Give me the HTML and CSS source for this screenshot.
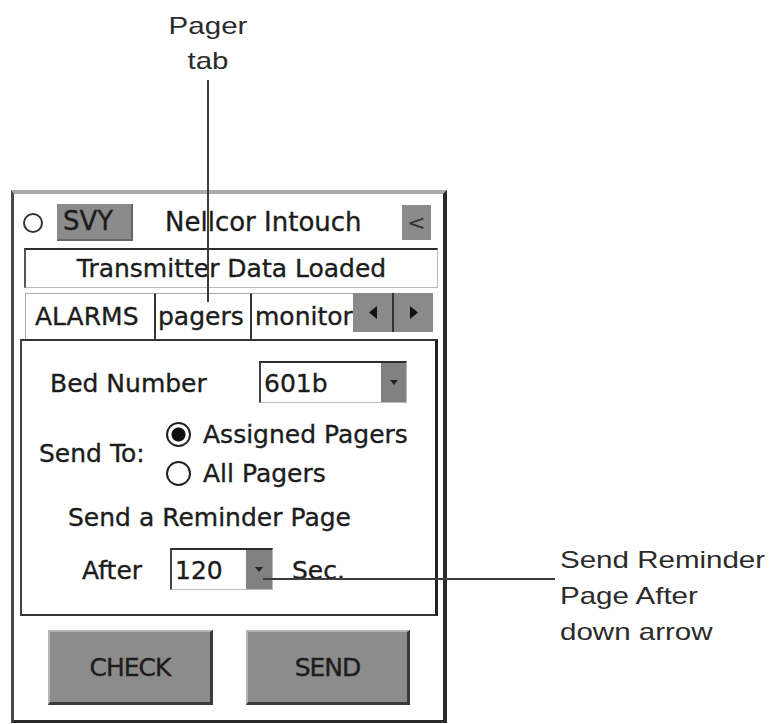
FILE: index.html
```html
<!DOCTYPE html>
<html>
<head>
<meta charset="utf-8">
<link rel="stylesheet" href="styles.css">
</head>
<body>
<div class="page">
  <div class="note note-top">Pager<br>tab</div>
  <div class="device">
    <div class="header">
      <span class="dot"></span>
      <span class="svy">SVY</span>
      <span class="title">Nellcor Intouch</span>
      <span class="back">&lt;</span>
    </div>
    <div class="status">Transmitter Data Loaded</div>
    <div class="tabs">
      <div class="tab tab-alarms">ALARMS</div>
      <div class="tab tab-pagers">pagers</div>
      <div class="tab tab-monitor">monitor</div>
      <div class="scroll">
        <span class="arrow"><svg width="8" height="13" viewBox="0 0 8 13"><polygon points="8,0 0,6.5 8,13" fill="#111"/></svg></span>
        <span class="arrow"><svg width="8" height="13" viewBox="0 0 8 13"><polygon points="0,0 8,6.5 0,13" fill="#111"/></svg></span>
      </div>
    </div>
    <div class="panel">
      <div class="row bed">
        <span class="label bed-label">Bed Number</span>
        <div class="combo combo-bed">
          <span class="combo-value">601b</span>
          <span class="combo-btn"><svg width="8" height="5" viewBox="0 0 8 5"><polygon points="0,0 8,0 4,5" fill="#222"/></svg></span>
        </div>
      </div>
      <div class="sendto">
        <span class="sendto-label">Send To:</span>
        <div class="radios">
          <div class="radio-row"><span class="radio checked"></span>Assigned Pagers</div>
          <div class="radio-row"><span class="radio"></span>All Pagers</div>
        </div>
      </div>
      <div class="reminder">Send a Reminder Page</div>
      <div class="row after">
        <span class="label after-label">After</span>
        <div class="combo combo-after">
          <span class="combo-value">120</span>
          <span class="combo-btn"><svg width="8" height="5" viewBox="0 0 8 5"><polygon points="0,0 8,0 4,5" fill="#222"/></svg></span>
        </div>
        <span class="label sec">Sec.</span>
      </div>
    </div>
    <div class="actions">
      <button class="btn btn-check">CHECK</button>
      <button class="btn btn-send">SEND</button>
    </div>
  </div>
  <div class="lead lead-v"></div>
  <div class="lead lead-h"></div>
  <div class="note note-right">Send Reminder<br>Page After<br>down arrow</div>
</div>
</body>
</html>
```

FILE: styles.css
```css
body {
  margin: 0;
  background: #fff;
  font-family: "DejaVu Sans", sans-serif;
  color: #1c1c1c;
}

.page {
  position: relative;
  width: 774px;
  height: 724px;
  box-sizing: border-box;
  padding: 190px 0 0 11px;
  overflow: hidden;
}

/* device window */
.device {
  width: 436px;
  box-sizing: border-box;
  border-top: 4px solid #a9a9a9;
  border-left: 3px solid #4a4a4a;
  border-right: 4px solid #2a2a2a;
  border-bottom: 3px solid #2a2a2a;
  padding-bottom: 15px;
  -webkit-text-stroke: 0.35px #1c1c1c;
}

.header {
  display: flex;
  align-items: center;
  height: 37px;
  margin-top: 10px;
}

.dot {
  width: 20px;
  height: 20px;
  box-sizing: border-box;
  border: 2px solid #333;
  border-radius: 50%;
  margin-left: 9px;
}

.svy {
  margin-left: 14px;
  width: 76px;
  height: 37px;
  box-sizing: border-box;
  padding-left: 6px;
  background: #8b8b8b;
  border-right: 2px solid #676767;
  border-bottom: 2px solid #676767;
  font-size: 26px;
  line-height: 35px;
}

.title {
  flex: 1;
  margin-left: 32px;
  font-size: 26px;
  line-height: 37px;
}

.back {
  width: 29px;
  height: 35px;
  margin-right: 12px;
  background: #8b8b8b;
  color: #333;
  -webkit-text-stroke: 0;
  font-size: 22px;
  line-height: 35px;
  text-align: center;
}

.status {
  margin: 7px 0 0 10px;
  width: 414px;
  height: 40px;
  box-sizing: border-box;
  border-top: 2px solid #2e2e2e;
  border-left: 2px solid #555;
  border-right: 1px solid #bbb;
  border-bottom: 1px solid #bbb;
  text-align: center;
  font-size: 25px;
  line-height: 37px;
}

/* tabs */
.tabs {
  display: flex;
  margin: 5px 0 0 11px;
  height: 46px;
}

.tab {
  box-sizing: border-box;
  height: 46px;
  font-size: 25px;
  line-height: 45px;
  border-top: 1px solid #aaa;
  white-space: nowrap;
  overflow: hidden;
}

.tab-alarms {
  width: 131px;
  padding-left: 9px;
  border-left: 1px solid #aaa;
  border-right: 2px solid #333;
}

.tab-pagers {
  width: 96px;
  padding-left: 2px;
  border-right: 2px solid #333;
}

.tab-monitor {
  width: 101px;
  padding-left: 3px;
}

.scroll {
  display: flex;
  width: 80px;
  height: 39px;
}

.arrow {
  flex: 1;
  display: flex;
  align-items: center;
  justify-content: center;
  background: #8a8a8a;
}

.arrow + .arrow {
  border-left: 2px solid #333;
}

/* panel */
.panel {
  margin-left: 6px;
  width: 418px;
  box-sizing: border-box;
  border-top: 2px solid #333;
  border-left: 2px solid #444;
  border-right: 3px solid #222;
  border-bottom: 2px solid #333;
  padding: 20px 0 24px;
}

.row {
  display: flex;
  align-items: flex-start;
  height: 42px;
}

.label {
  font-size: 25px;
  line-height: 42px;
  padding-top: 2px;
}

.bed {
  padding-left: 28px;
}

.bed-label {
  width: 209px;
}

.combo {
  display: flex;
  height: 42px;
  box-sizing: border-box;
  border-top: 2px solid #2e2e2e;
  border-left: 2px solid #444;
  border-right: 1px solid #bbb;
  border-bottom: 1px solid #bbb;
}

.combo-bed {
  width: 148px;
}

.combo-after {
  width: 103px;
}

.combo-value {
  flex: 1;
  font-size: 25px;
  line-height: 36px;
  padding: 3px 0 0 3px;
}

.combo-btn {
  width: 25px;
  display: flex;
  align-items: center;
  justify-content: center;
  background: #818181;
}

.combo-after .combo-btn {
  width: 26px;
}

.sendto {
  display: flex;
  align-items: center;
  margin-top: 12px;
  padding-left: 17px;
}

.sendto-label {
  width: 125px;
  font-size: 25px;
  line-height: 30px;
}

.radio-row {
  display: flex;
  align-items: center;
  height: 39px;
  font-size: 25px;
  line-height: 39px;
}

.radio {
  width: 25px;
  height: 25px;
  box-sizing: border-box;
  margin: 0 12px 0 2px;
  border: 2px solid #222;
  border-radius: 50%;
  background: #fff;
}

.radio.checked {
  background: radial-gradient(circle, #111 6.5px, #fff 7.5px);
}

.reminder {
  margin-top: 10px;
  padding-left: 46px;
  font-size: 25px;
  line-height: 30px;
}

.after {
  margin-top: 15px;
  padding-left: 60px;
}

.after-label {
  width: 88px;
}

.sec {
  margin-left: 19px;
}

/* action buttons */
.actions {
  display: flex;
  gap: 33px;
  margin: 14px 0 0 34px;
}

.btn {
  width: 165px;
  height: 75px;
  box-sizing: border-box;
  padding: 0;
  background: #8c8c8c;
  border-top: 2px solid #b5b5b5;
  border-left: 2px solid #b5b5b5;
  border-right: 3px solid #3a3a3a;
  border-bottom: 3px solid #3a3a3a;
  font-family: "DejaVu Sans", sans-serif;
  font-size: 25px;
  letter-spacing: -1px;
  color: #1c1c1c;
  -webkit-text-stroke: 0.35px #1c1c1c;
}

.btn-send {
  width: 164px;
}

/* annotations */
.note {
  position: absolute;
  font-family: "Liberation Sans", Arial, sans-serif;
  font-size: 24px;
  color: #2b2b2b;
  transform: scaleX(1.23);
  white-space: nowrap;
}

.note-top {
  left: 148px;
  top: 8px;
  width: 120px;
  text-align: center;
  line-height: 35px;
}

.note-right {
  left: 560px;
  top: 542px;
  line-height: 36px;
  transform-origin: left top;
}

.lead {
  position: absolute;
  background: #3d3d3d;
}

.lead-v {
  left: 207px;
  top: 80px;
  width: 2px;
  height: 222px;
}

.lead-h {
  left: 263px;
  top: 578px;
  width: 292px;
  height: 2px;
}
```
